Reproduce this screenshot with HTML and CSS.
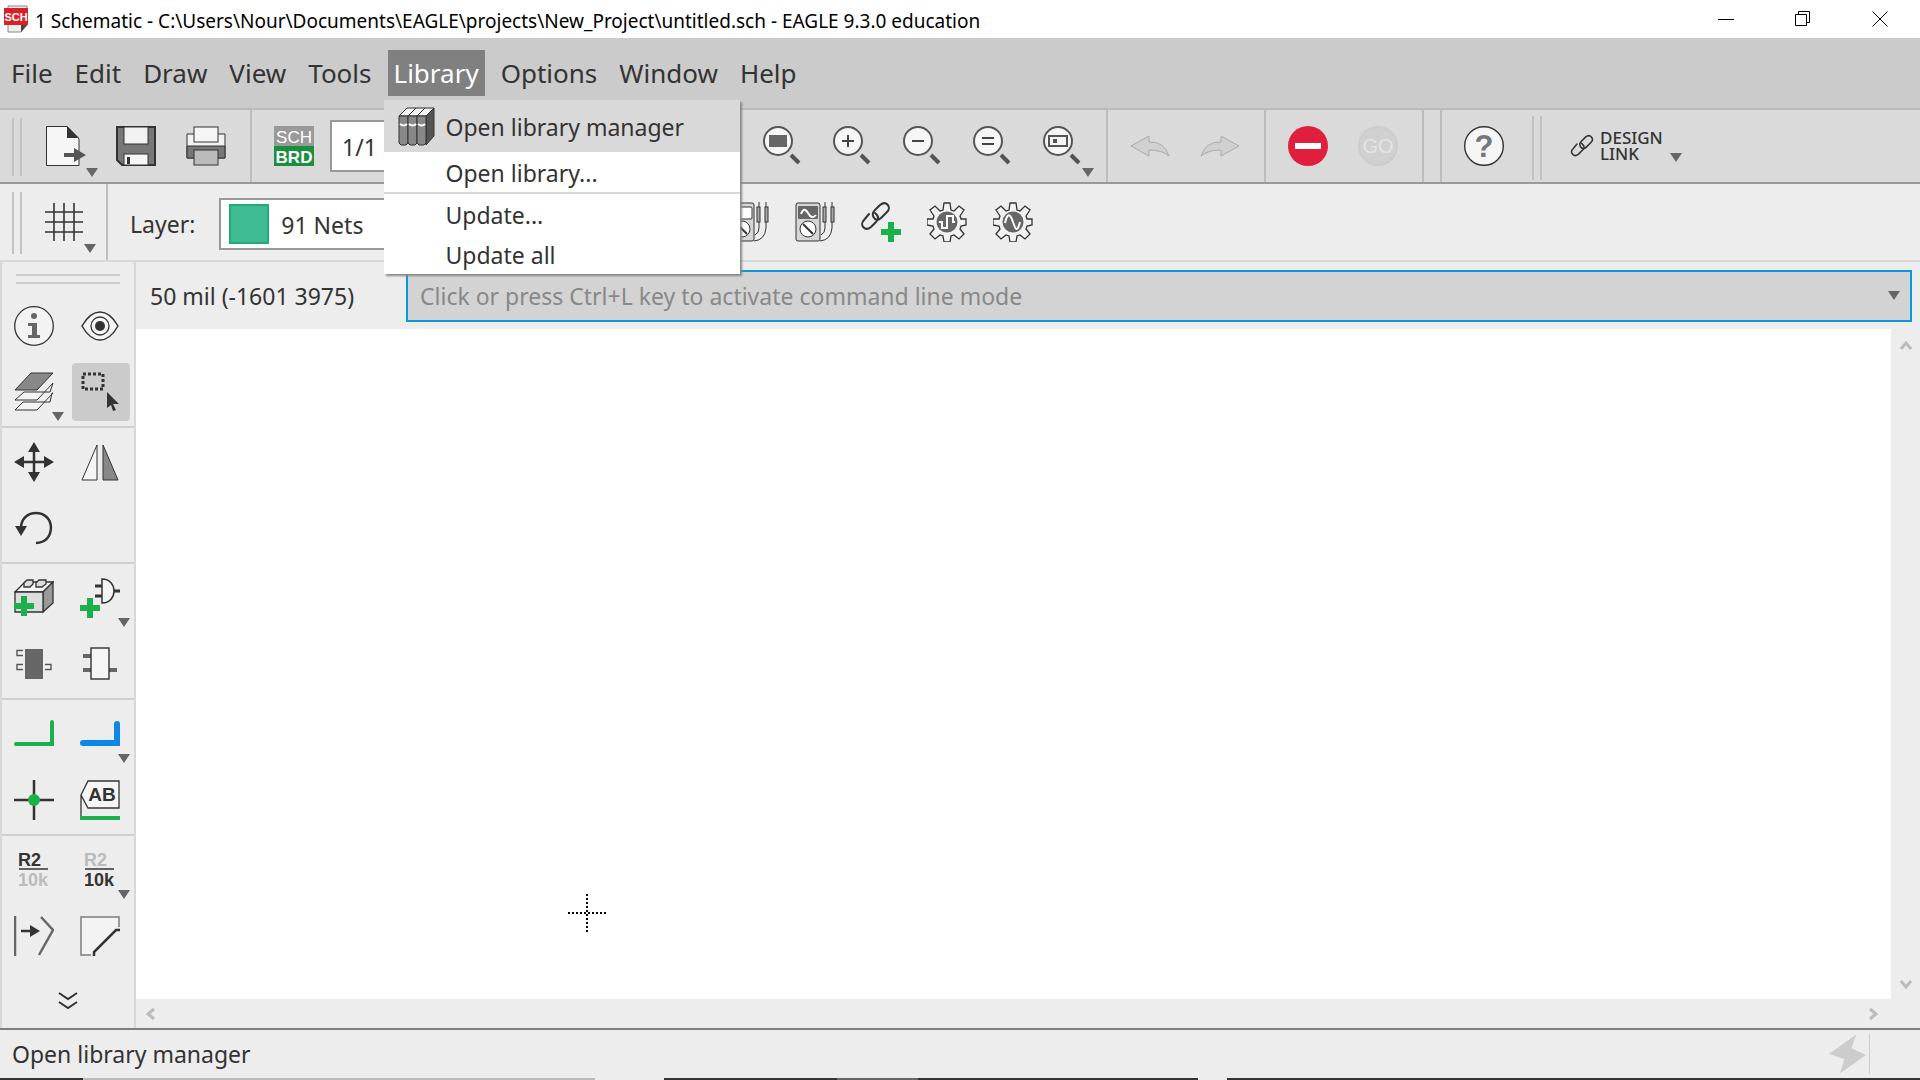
FILE: index.html
```html
<!DOCTYPE html>
<html lang="en">
<head>
<meta charset="utf-8">
<title>1 Schematic - EAGLE 9.3.0 education</title>
<link rel="stylesheet" href="styles.css">
</head>
<body>
<svg class="defs" aria-hidden="true">
  <defs>
    <g id="lens">
      <path d="M29 29 L37 37" stroke="#555" stroke-width="4" fill="none"/>
      <circle cx="16" cy="15" r="14" fill="#f6f6f6" stroke="#555" stroke-width="2"/>
    </g>
    <g id="chain" fill="none" stroke-linecap="round">
      <path d="M14 17 C10 13 12 10 14 8 L19 3 C25 -2 31 5 26 10 L20 16 C18 18 16 18 14 17"/>
      <path d="M14 11 C19 15 17 18 15 20 L10 25 C4 30 -2 23 3 18 L8 12"/>
    </g>
    <g id="plus"><path d="M7 0h6v7h7v6h-7v7H7v-7H0V7h7z" fill="#1cb04c"/></g>
    <g id="meter" stroke="#333" stroke-width="1">
      <rect x="1" y="1" width="24" height="38" rx="2" fill="#d6d6d6"/>
      <circle cx="13" cy="27" r="8" fill="#fff"/>
      <path d="M8 22 L18 32" stroke-width="2"/>
      <path d="M30 20 V26 Q30 31 26 33 M37 20 V26 Q36 38 25 39 M30 0 V6 M37 0 V6" fill="none"/>
      <rect x="28" y="5" width="3" height="15" fill="#aaa"/><rect x="36" y="5" width="3" height="15" fill="#aaa"/>
    </g>
    <g id="gear">
      <path d="M17 1h6l1 7 3 1 5-5 5 4-4 6 1 3 5 0v6l-5 1-1 3 4 5-5 5-5-4-3 1-1 6h-6l-1-6-3-1-5 4-5-5 4-5-1-3-6-1v-6l6 0 1-3-4-6 5-4 5 5 3-1z" fill="#f2f2f2" stroke="#333" stroke-width="1.3"/>
      <circle cx="20" cy="20" r="10.500" fill="#666"/>
    </g>
  </defs>
</svg>

<header class="titlebar">
  <svg class="app-icon" width="26" height="28" viewBox="0 0 26 28"><path d="M4 1H23V20L17 27H4z" fill="#eee" stroke="#888"/><path d="M17 27V20H23z" fill="#444"/><rect width="24" height="17" y="3" fill="#dc1f26"/><text x="12" y="16" class="t-sch">SCH</text></svg>
  <h1>1 Schematic - C:\Users\Nour\Documents\EAGLE\projects\New_Project\untitled.sch - EAGLE 9.3.0 education</h1>
  <div class="win-controls">
    <button aria-label="Minimize"><svg width="16" height="16"><path d="M0 8.500H16" stroke="#000"/></svg></button>
    <button aria-label="Restore"><svg width="16" height="16" fill="none" stroke="#000"><path d="M.5 3.500H11.500V14.500H.5zM3.500 3V.5H14.500V11.500H12"/></svg></button>
    <button aria-label="Close"><svg width="16" height="16"><path d="M.5 .5L15.500 15.500M15.500 .5L.5 15.500" stroke="#000"/></svg></button>
  </div>
</header>

<nav class="menubar">
  <button>File</button>
  <button>Edit</button>
  <button>Draw</button>
  <button>View</button>
  <button>Tools</button>
  <div class="menu-open">
    <button class="active" aria-expanded="true">Library</button>
    <div class="dropdown" role="menu">
      <button role="menuitem" class="hover">
        <svg width="38" height="40" viewBox="0 0 38 40" stroke="#333">
          <path d="M1 9L9 1H36L28 9z" fill="#f5f5f5"/>
          <path d="M28 9L36 1V29L28 38z" fill="#555"/>
          <path d="M1 9H10V36L8 38H3L1 36z" fill="#888"/><path d="M10 9H19V36L17 38H12L10 36z" fill="#888"/><path d="M19 9H28V36L26 38H21L19 36z" fill="#888"/>
          <path d="M10 9L18 1M19 9L27 1"/>
          <path d="M2 17Q6 20 9 17M11 17Q15 20 18 17M20 17Q24 20 27 17" stroke="#fff" stroke-width="2" fill="none"/>
        </svg>
        <span>Open library manager</span>
      </button>
      <button role="menuitem"><span>Open library...</span></button>
      <hr>
      <button role="menuitem"><span>Update...</span></button>
      <button role="menuitem"><span>Update all</span></button>
    </div>
  </div>
  <button>Options</button>
  <button>Window</button>
  <button>Help</button>
</nav>

<div class="toolbar main" role="toolbar">
  <div class="grip"></div>
  <div class="group">
    <button aria-label="New" class="has-more"><svg width="40" height="40" viewBox="0 0 40 40"><path d="M.5 .5H21L33 13V39.500H.5z" fill="#f6f6f6" stroke="#333"/><path d="M21 0V12H33z" fill="#333"/><path d="M18 27H28V22L40 29L28 36V31H18z" fill="#555"/></svg></button>
    <button aria-label="Save"><svg width="40" height="40" viewBox="0 0 40 40"><path d="M1 1H39V39H6L1 34z" fill="#777" stroke="#333" stroke-width="2"/><rect x="8" y="1" width="24" height="17" fill="#f2f2f2" stroke="#333"/><rect x="8" y="28" width="24" height="11" fill="#f6f6f6" stroke="#333"/><rect x="11" y="31" width="3" height="7" fill="#333"/></svg></button>
    <button aria-label="Print"><svg width="40" height="40" viewBox="0 0 40 40" stroke="#333"><path d="M1 8H39V32H1z" fill="#f2f2f2"/><path d="M1 20H39V32H1z" fill="#777"/><rect x="8" y="1" width="24" height="15" fill="#f5f5f5"/><rect x="8" y="24" width="24" height="15" fill="#bbb"/></svg></button>
  </div>
  <div class="group sheet-group">
    <button aria-label="Switch to board"><svg width="40" height="40" viewBox="0 0 40 40"><rect width="40" height="20" fill="#999"/><rect y="20" width="40" height="20" fill="#1a8f3f"/><text x="20" y="17" class="t-box">SCH</text><text x="20" y="37" class="t-box bold">BRD</text></svg></button>
    <select class="sheet" aria-label="Sheet"><option>1/1</option></select>
    <button aria-label="Fit"><svg width="40" height="40" viewBox="0 0 40 40"><use href="#lens"/><rect x="7" y="9" width="18" height="12" fill="#666"/></svg></button>
    <button aria-label="Zoom in"><svg width="40" height="40" viewBox="0 0 40 40"><use href="#lens"/><path d="M10 15H22M16 9V21" stroke="#444" stroke-width="2"/></svg></button>
    <button aria-label="Zoom out"><svg width="40" height="40" viewBox="0 0 40 40"><use href="#lens"/><path d="M10 15H22" stroke="#444" stroke-width="2"/></svg></button>
    <button aria-label="Redraw"><svg width="40" height="40" viewBox="0 0 40 40"><use href="#lens"/><path d="M10 12H22M10 18H22" stroke="#444" stroke-width="2"/></svg></button>
    <button aria-label="Zoom select" class="has-more"><svg width="40" height="40" viewBox="0 0 40 40"><use href="#lens"/><rect x="7" y="10" width="18" height="10" fill="none" stroke="#555" stroke-width="2"/><rect x="11" y="13" width="4" height="4" fill="#555"/></svg></button>
  </div>
  <div class="group">
    <button aria-label="Undo"><svg width="40" height="40" viewBox="0 0 40 40"><path d="M1 20L19 10V16Q34 15 39 30Q32 24 19 24V30z" fill="#d0d0d0" stroke="#aaa"/></svg></button>
    <button aria-label="Redo"><svg width="40" height="40" viewBox="0 0 40 40"><path d="M39 20L21 10V16Q6 15 1 30Q8 24 21 24V30z" fill="#d0d0d0" stroke="#aaa"/></svg></button>
  </div>
  <div class="group">
    <button aria-label="Stop"><svg width="40" height="40" viewBox="0 0 40 40"><circle cx="20" cy="20" r="20" fill="#e01f3d"/><rect x="7" y="17" width="26" height="6" fill="#fff"/></svg></button>
    <button aria-label="Go"><svg width="40" height="40" viewBox="0 0 40 40"><circle cx="20" cy="20" r="19" fill="#d0d0d0" stroke="#ccc" stroke-width="2"/><text x="20" y="27" class="t-go">GO</text></svg></button>
  </div>
  <div class="spacer"></div>
  <div class="group last">
    <button aria-label="Help"><svg width="40" height="40" viewBox="0 0 40 40"><circle cx="20" cy="20" r="19.300" fill="#f5f5f5" stroke="#333" stroke-width="1.400"/><text x="20" y="31" class="t-help">?</text></svg></button>
  </div>
  <div class="grip short"></div>
  <button class="design has-more"><svg width="24" height="24" viewBox="-1 -1 31 31"><use href="#chain" stroke="#333" stroke-width="2"/></svg><span class="design-name"><span>DESIGN</span><span>LINK</span></span></button>
</div>

<div class="toolbar second" role="toolbar">
  <div class="grip"></div>
  <div class="group grid-group">
    <button aria-label="Grid" class="has-more"><svg width="40" height="40" viewBox="0 0 40 40"><path d="M10 1V39M20 1V39M30 1V39M1 10H39M1 20H39M1 30H39" stroke="#333" stroke-width="1.600"/></svg></button>
  </div>
  <label for="layer">Layer:</label>
  <div class="layer-box"><i></i><select id="layer"><option>91 Nets</option></select></div>
  <div class="group sim">
    <button aria-label="Meter"><svg width="40" height="40" viewBox="0 0 40 40"><use href="#meter"/><rect x="4" y="5" width="19" height="12" rx="1" fill="#fff" stroke="#333"/></svg></button>
    <button aria-label="Wave meter"><svg width="40" height="40" viewBox="0 0 40 40"><use href="#meter"/><rect x="3" y="4" width="20" height="13" rx="1" fill="#666"/><path d="M6 12Q9 4 13 11T21 13" fill="none" stroke="#fff" stroke-width="2"/></svg></button>
    <button aria-label="Add link"><svg width="40" height="40" viewBox="0 0 40 40"><use href="#chain" stroke="#333" stroke-width="2"/><use href="#plus" x="20" y="20"/></svg></button>
    <button aria-label="Digital simulation"><svg width="40" height="40" viewBox="0 0 40 40"><use href="#gear"/><path d="M12 20H15V26H20V14H26V20H28" fill="none" stroke="#fff" stroke-width="2"/></svg></button>
    <button aria-label="Analog simulation"><svg width="40" height="40" viewBox="0 0 40 40"><use href="#gear"/><path d="M12 21C15 8 18 14 20 20S24 32 27 20" fill="none" stroke="#fff" stroke-width="2"/></svg></button>
  </div>
</div>

<main class="workspace">
  <aside class="sidebar">
    <section class="first">
      <div class="hgrip"></div>
      <button aria-label="Info"><svg width="40" height="40" viewBox="0 0 40 40"><circle cx="20" cy="20" r="19.300" fill="#f3f3f3" stroke="#333" stroke-width="1.300"/><circle cx="20" cy="10" r="3" fill="#666"/><path d="M14 17H23V29H26V32H14V29H18V20H14z" fill="#666"/></svg></button>
      <button aria-label="Show"><svg width="40" height="40" viewBox="0 0 40 40"><path d="M2 20Q10 6 20 6T38 20Q30 34 20 34T2 20z" fill="#f5f5f5" stroke="#333" stroke-width="1.500"/><circle cx="20" cy="20" r="9" fill="none" stroke="#333" stroke-width="1.300"/><circle cx="20" cy="20" r="5" fill="#333"/></svg></button>
      <button aria-label="Layers" class="has-more"><svg width="40" height="40" viewBox="0 0 40 40" stroke="#333" fill="#f3f3f3"><path d="M1 38L9 30H36L38 21H39L23 38z"/><path d="M1 28L10 20H36L39 11L23 28z"/><path d="M1 18L17 1H39L23 18z" fill="#888"/></svg></button>
      <button aria-label="Group" class="selected"><svg width="40" height="40" viewBox="0 0 40 40"><rect x="3" y="2" width="20" height="15" fill="none" stroke="#333" stroke-width="3" stroke-dasharray="3 2"/><path d="M27 20L39 32H33L36 38L33 39L31 33L27 36z" fill="#333"/></svg></button>
    </section>
    <section>
      <button aria-label="Move"><svg width="40" height="40" viewBox="0 0 40 40"><path d="M20 6V34M6 20H34" stroke="#333" stroke-width="2.500"/><path d="M20 0L26 10H14zM20 40L14 30H26zM0 20L10 14V26zM40 20L30 26V14z" fill="#333"/></svg></button>
      <button aria-label="Mirror"><svg width="40" height="40" viewBox="0 0 40 40" stroke="#333"><path d="M17 3V38H2z" fill="#f5f5f5"/><path d="M23 3L38 38H23z" fill="#888"/></svg></button>
      <button aria-label="Rotate"><svg width="40" height="40" viewBox="0 0 40 40"><path d="M7 20C7 0 37 0 37 20Q36 34 22 35" fill="none" stroke="#333" stroke-width="2.500"/><path d="M1 18H13L7 28z" fill="#333"/></svg></button>
    </section>
    <section>
      <button aria-label="Add part"><svg width="40" height="40" viewBox="0 0 40 40" stroke="#333" stroke-width="1.300"><path d="M1 14L11 4H39L29 14z" fill="#f5f5f5"/><path d="M29 14L39 4V25L29 34z" fill="#999"/><path d="M1 14H29V34H1z" fill="#ddd"/><path d="M10 9V5L13 2H19V6L16 9zM22 9V5L25 2H32V6L28 9z" fill="#ddd"/><use href="#plus" y="18" stroke="none"/></svg></button>
      <button aria-label="Add gate" class="has-more"><svg width="40" height="40" viewBox="0 0 40 40"><path d="M22 1C38 1 38 25 22 25z" fill="#f5f5f5" stroke="#333" stroke-width="1.500"/><path d="M15 8H22M15 18H22M34 13H40" stroke="#333" stroke-width="3"/><use href="#plus" y="20"/></svg></button>
      <button aria-label="Replace part"><svg width="40" height="40" viewBox="0 0 40 40"><path d="M9 6.500H3V11.500H9M9 20.500H3V25.500H9M31 20.500H37V25.500H31" fill="#f5f5f5" stroke="#555" stroke-width="1.400"/><rect x="11" y="5" width="18" height="30" fill="#666"/></svg></button>
      <button aria-label="Gate swap"><svg width="40" height="40" viewBox="0 0 40 40"><path d="M3 12H11M3 26H11M29 26H37" stroke="#666" stroke-width="4"/><rect x="11" y="4" width="18" height="31" fill="#f5f5f5" stroke="#333" stroke-width="1.400"/></svg></button>
    </section>
    <section>
      <button aria-label="Net"><svg width="40" height="40" viewBox="0 0 40 40"><path d="M2 30H38V8" fill="none" stroke="#1cb04c" stroke-width="4" stroke-linecap="round"/></svg></button>
      <button aria-label="Bus" class="has-more"><svg width="40" height="40" viewBox="0 0 40 40"><path d="M3 29H37V10" fill="none" stroke="#0e86e8" stroke-width="6" stroke-linecap="round"/></svg></button>
      <button aria-label="Junction"><svg width="40" height="40" viewBox="0 0 40 40"><path d="M20 0V40M0 20H40" stroke="#333" stroke-width="2.500"/><circle cx="20" cy="20" r="6" fill="#1cb04c"/></svg></button>
      <button aria-label="Label"><svg width="40" height="40" viewBox="0 0 40 40"><path d="M1 15V38M1 15L8 1H39V28H8z" fill="#f5f5f5" stroke="#333" stroke-width="1.300"/><path d="M0 38H40" stroke="#1cb04c" stroke-width="4"/><text x="22" y="21" class="t-ab">AB</text></svg></button>
    </section>
    <section class="plain">
      <button aria-label="Name"><svg width="40" height="40" viewBox="0 0 40 40"><text x="4" y="16" class="t-r">R2</text><path d="M5 19H34" stroke="#333" stroke-width="1.500"/><text x="4" y="36" class="t-r dim">10k</text></svg></button>
      <button aria-label="Value" class="has-more"><svg width="40" height="40" viewBox="0 0 40 40"><text x="4" y="16" class="t-r dim">R2</text><path d="M5 19H34" stroke="#333" stroke-width="1.500"/><text x="4" y="36" class="t-r">10k</text></svg></button>
      <button aria-label="Split"><svg width="40" height="40" viewBox="0 0 40 40"><path d="M1 0V40M27 1L39 14L25 39" fill="none" stroke="#666" stroke-width="2.500"/><path d="M7 15H18" stroke="#333" stroke-width="2.500"/><path d="M16 9L26 15L16 21z" fill="#333"/></svg></button>
      <button aria-label="Miter"><svg width="40" height="40" viewBox="0 0 40 40"><path d="M11 39H1V1H39V11" fill="#f3f3f3" stroke="#999" stroke-width="2"/><path d="M14 40V36L36 14H40" fill="none" stroke="#333" stroke-width="2.500"/></svg></button>
      <button aria-label="More tools" class="more"><svg width="20" height="18" fill="none" stroke="#333" stroke-width="2"><path d="M1 1L10 7L19 1M1 10L10 16L19 10"/></svg></button>
    </section>
  </aside>

  <div class="editor">
    <div class="command-row">
      <output class="coords">50 mil (-1601 3975)</output>
      <div class="command">
        <input type="text" aria-label="Command line" placeholder="Click or press Ctrl+L key to activate command line mode">
        <button class="caret" aria-label="Command history"></button>
      </div>
    </div>
    <div class="canvas-row">
      <div class="canvas">
        <svg class="cursor" width="40" height="40" viewBox="0 0 40 40" stroke="#000" stroke-width="2" stroke-dasharray="2 2"><path d="M1 20H40M20 1V40"/></svg>
      </div>
      <div class="vscroll">
        <button aria-label="Scroll up"><svg width="12" height="10"><path d="M1 8L6 2L11 8"/></svg></button>
        <button aria-label="Scroll down"><svg width="12" height="10"><path d="M1 2L6 8L11 2"/></svg></button>
      </div>
    </div>
    <div class="hscroll">
      <button aria-label="Scroll left"><svg width="10" height="12"><path d="M8 1L2 6L8 11"/></svg></button>
      <button aria-label="Scroll right"><svg width="10" height="12"><path d="M2 1L8 6L2 11"/></svg></button>
    </div>
  </div>
</main>

<footer class="status">
  <span>Open library manager</span>
  <svg width="42" height="40" viewBox="0 0 42 40"><path d="M29 0L24 14L39 21L12 40L17 25L1 20z" fill="#ccc"/></svg>
</footer>
<div class="taskbar-edge"></div>
</body>
</html>
```
FILE: styles.css
```css
* { box-sizing: border-box; }

body {
  margin: 0;
  min-height: 100vh;
  display: flex;
  flex-direction: column;
  background: #ededed;
  color: #333;
  font-family: "Noto Sans", "Open Sans", sans-serif;
  font-size: 23px;
  line-height: 32px;
}

button, input, select {
  margin: 0;
  padding: 0;
  border: 0;
  border-radius: 0;
  background: none;
  color: inherit;
  font: inherit;
  appearance: none;
}

svg { display: block; flex: none; }
.defs { position: absolute; width: 0; height: 0; }

/* Title bar */
.titlebar {
  display: flex;
  align-items: center;
  height: 38px;
  padding: 0 2px 0 4px;
  background: #fff;
  color: #000;
}
.titlebar h1 {
  flex: 1;
  margin: 0;
  padding: 4px 0 0 5px;
  font-size: 19px;
  font-weight: 400;
  line-height: 34px;
  white-space: nowrap;
}
.win-controls { display: flex; }
.win-controls button { display: grid; place-items: center; width: 77px; height: 38px; }

/* Menu bar */
.menubar {
  display: flex;
  align-items: flex-start;
  gap: 10px;
  height: 72px;
  padding: 12px 5px 0;
  border-bottom: 2px solid #bbb;
  background: #cbcbcb;
  font-size: 26px;
}
.menubar > button, .menu-open > button { padding: 0 6px; height: 46px; white-space: nowrap; }
.menu-open { position: relative; }
.menu-open .active { background: #808080; color: #fff; }
.dropdown {
  position: absolute;
  z-index: 5;
  top: 50px;
  left: -4px;
  width: 356px;
  background: #fff;
  box-shadow: 2px 2px 2px #888;
  font-size: 23px;
}
.dropdown button {
  display: flex;
  align-items: center;
  width: 100%;
  height: 40px;
  padding: 2px 0 0 62px;
}
.dropdown .hover { height: 52px; padding-left: 14px; gap: 10px; background: #d9d9d9; }
.dropdown hr { height: 2px; margin: 0; border: 0; background: #d9d9d9; }

/* Toolbars */
.toolbar { display: flex; align-items: stretch; }
.main { height: 74px; border-bottom: 2px solid #999; background: #dadada; }
.second { height: 78px; border-bottom: 2px solid #d8d8d8; background: #ededed; }
.grip {
  width: 10px;
  margin: 8px 2px 6px 12px;
  border: solid #c2c2c2;
  border-width: 0 2px;
}
.grip.short { margin: 6px 28px 2px 28px; }
.group {
  display: flex;
  align-items: center;
  gap: 30px;
  padding: 0 24px 0 22px;
  border-right: 2px solid #bdbdbd;
}
.group.last { border-right: 0; padding-right: 0; }
.spacer { width: 18px; border-right: 2px solid #bdbdbd; }
.sheet {
  width: 402px;
  height: 52px;
  margin-left: -14px;
  padding: 2px 0 0 10px;
  border: 2px solid #999;
  background: #fff;
}
.has-more { position: relative; }
.has-more::after, .caret::after {
  content: "";
  border: solid transparent;
  border-width: 9px 6px 0;
  border-top-color: #666;
}
.has-more::after { position: absolute; right: -12px; bottom: -11px; }
.design { display: flex; align-items: center; gap: 6px; color: #333; }
.design-name {
  display: grid;
  font-size: 17px;
  font-weight: 500;
  line-height: 16px;
  text-align: left;
}
.design.has-more::after { right: -19px; bottom: 20px; }
.grid-group { padding-left: 20px; padding-right: 22px; }
.second label { align-self: center; padding: 4px 24px 0 22px; }
.layer-box {
  display: flex;
  align-items: center;
  align-self: center;
  width: 480px;
  height: 52px;
  margin-top: 4px;
  padding-left: 8px;
  border: 2px solid #999;
  background: #fff;
}
.layer-box i { width: 40px; height: 40px; border: 2px solid #20ac7a; background: #3ebb92; }
.layer-box select { flex: 1; height: 48px; padding: 2px 0 0 12px; }
.group.sim { gap: 26px; padding: 0 0 0 30px; border: 0; }

/* Workspace */
.workspace { display: flex; flex: 1; }
.sidebar { width: 136px; flex: none; border: solid #d8d8d8; border-width: 0 2px; }
.sidebar section {
  display: grid;
  grid-template-columns: 1fr 1fr;
  padding: 1px 0;
  border-bottom: 2px solid #cfcfcf;
}
.sidebar .plain { border: 0; }
.sidebar button { display: grid; place-items: center; height: 66px; padding-right: 2px; }
.sidebar .has-more::after { right: 4px; bottom: 4px; }
.sidebar .selected { height: 58px; margin: 4px; border-radius: 4px; background: #cbcbcb; }
.sidebar .more { grid-column: 1 / -1; height: 56px; padding: 8px 0 0; }
.hgrip {
  grid-column: 1 / -1;
  height: 10px;
  margin: 11px 14px 9px;
  border: solid #cbcbcb;
  border-width: 2px 0;
}

.editor { display: flex; flex: 1; flex-direction: column; min-width: 0; }
.command-row { display: flex; align-items: center; height: 67px; padding: 0 8px 0 14px; }
.coords { width: 256px; white-space: nowrap; }
.command {
  display: flex;
  flex: 1;
  height: 52px;
  border: 2px solid #0a98d9;
  background: #d3d3d3;
}
.command input { flex: 1; min-width: 0; padding-left: 12px; outline: 0; }
.command input::placeholder { color: #888; opacity: 1; }
.caret { display: grid; place-items: center; width: 32px; }
.canvas-row { display: flex; flex: 1; }
.canvas { position: relative; flex: 1; background: #fff; }
.cursor { position: absolute; left: 431px; top: 564px; }
.vscroll, .hscroll { display: flex; justify-content: space-between; }
.vscroll { flex-direction: column; align-items: center; width: 29px; padding: 12px 0 10px; }
.hscroll { height: 29px; padding: 0 42px 0 10px; align-items: center; }
.vscroll svg, .hscroll svg { fill: none; stroke: #bbb; stroke-width: 3; }

/* Status bar */
.status {
  display: flex;
  align-items: center;
  justify-content: space-between;
  height: 50px;
  padding: 0 50px 0 12px;
  border-top: 2px solid #808080;
}
.status svg { border-right: 1px solid #ccc; }
.taskbar-edge {
  height: 2px;
  background: linear-gradient(90deg, #333 0 4.3%, #bbb 4.3% 31%, #eee 31% 34.6%, #333 34.6% 43.6%, #666 43.6% 47.8%, #333 47.8% 62.4%, #eee 62.4% 63.9%, #333 63.9%);
}

/* Lettering inside icons */
svg text { font-family: "Liberation Sans", Arial, sans-serif; stroke: none; }
.t-sch { font-size: 11px; font-weight: 700; fill: #fff; text-anchor: middle; }
.t-box { font-size: 17px; fill: #fff; text-anchor: middle; }
.t-box.bold { font-weight: 700; }
.t-go { font-size: 20px; fill: #e4e4e4; text-anchor: middle; }
.t-help { font-size: 31px; font-weight: 700; fill: #777; text-anchor: middle; }
.t-ab { font-size: 19px; font-weight: 700; fill: #333; text-anchor: middle; }
.t-r { font-size: 18px; font-weight: 700; fill: #333; }
.t-r.dim { fill: #bbb; }
```
